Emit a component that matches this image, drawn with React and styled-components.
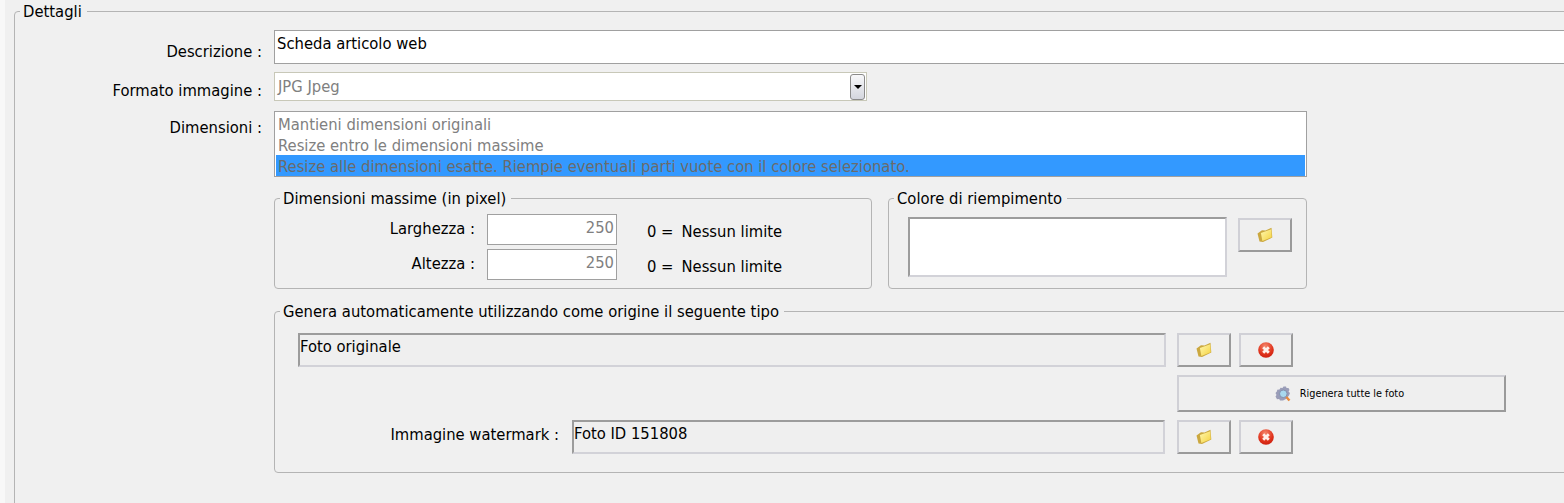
import React from "react";
import styled, { createGlobalStyle } from "styled-components";

const Global = createGlobalStyle`
  html, body { margin: 0; padding: 0; height: 503px; overflow: hidden; background: #f0f0f0; }
  #root { height: 503px; overflow: hidden; }
`;
const Page = styled.div`
  width: 1700px; height: 503px; box-sizing: border-box; overflow: hidden;
  padding: 1px 0 0 9px; background: #f0f0f0; border-left: 5px solid #f8f8f8;
  font-family: "DejaVu Sans Condensed", "DejaVu Sans", sans-serif; font-size: 16.45px; color: #000;
`;
const Group = styled.fieldset`
  margin: 0; min-width: 0; box-sizing: border-box;
  border: 1px solid #b4b4b4; border-radius: 4px;
  padding: 0;
  width: ${p => p.$w}px;
  height: ${p => p.$h}px;
`;
const Caption = styled.legend`
  margin-left: 5px; padding: 2px 5px 0 3px; font-size: 16.45px; line-height: 18px; color: #000;
`;
const Outer = styled.fieldset`
  margin: 0; min-width: 0; box-sizing: border-box; height: 600px; padding: 9px 0 0 0;
  border: 1px solid #b4b4b4; border-radius: 4px;
`;
const Row = styled.div`
  display: flex; align-items: flex-start;
  margin-bottom: ${p => p.$mb || 0}px;
`;
const Label = styled.div`
  width: 247px; flex: none; text-align: right; padding-top: ${p => p.$top || 0}px; line-height: 18px; white-space: pre;
`;
const Field = styled.div`
  margin-left: 12px; box-sizing: border-box; background: #fff; white-space: nowrap; overflow: hidden;
  border: 1px solid #a0a0a0; flex: 1; height: 34px;
  padding: 4px 2px; line-height: 18px;
`;
const Select = styled.div`
  margin-left: 12px; box-sizing: border-box; width: 593px; height: 29px; flex: none;
  background: #fff; border: 1px solid #c8c8b8; color: #808080; padding: 0 1px 0 3px;
  display: flex; align-items: center; justify-content: space-between;
`;
const SelectBtn = styled.div`
  width: 15px; height: 26px; box-sizing: border-box; border: 1px solid #8a8a8a; border-radius: 3px;
  background: linear-gradient(#f8f8fa, #d4d6de); display: flex; align-items: center; justify-content: center;
  &::after { content: ""; border: 4px solid transparent; border-top: 4px solid #000; border-bottom: 0; }
`;
const List = styled.div`
  margin-left: 12px; box-sizing: border-box; width: 1033px; height: 66px; flex: none;
  background: #fff; border: 1px solid #a0a0a0; padding: 1px; color: #808080;
`;
const Option = styled.div`
  height: 21px; line-height: 23px; padding-left: 2px; white-space: nowrap;
  background: ${p => p.$selected ? "#3399ff" : "transparent"};
  color: ${p => p.$selected ? "#6b6b6b" : "#808080"};
`;
const Indented = styled.div`margin-left: 259px;`;
const Pair = styled.div`display: flex; gap: 16px;`;
const DimBody = styled.div`padding-top: 6px;`;
const DimRow = styled.div`display: flex; align-items: flex-start; margin-bottom: 4px;`;
const DimLabel = styled.div`width: 200px; flex: none; text-align: right; padding-top: 6px; line-height: 18px;`;
const NumberBox = styled.div`
  margin-left: 12px; box-sizing: border-box; width: 130px; height: 31px; flex: none; background: #fff;
  border: 1px solid #a0a0a0; color: #808080; text-align: right; padding: 4px 2px; line-height: 18px;
`;
const Hint = styled.div`display: flex; gap: 8px; margin-left: 30px; padding-top: 9px; line-height: 18px; white-space: nowrap;`;
const ColorBody = styled.div`display: flex; align-items: flex-start; padding: 9px 0 0 19px;`;
const Sunken = styled.div`
  box-sizing: border-box; flex: none; width: ${p => p.$w}px; height: ${p => p.$h}px; margin-left: ${p => p.$ml || 0}px;
  background: ${p => p.$white ? "#fff" : "#efefef"}; line-height: 18px; padding: 3px 0 0 0; white-space: nowrap;
  border: 2px solid #d2d2d8; border-top-color: #9c9c9c; border-left-color: #9c9c9c;
`;
const Btn = styled.button`
  box-sizing: border-box; flex: none; width: ${p => p.$w || 54}px; height: ${p => p.$h || 34}px;
  margin-left: ${p => p.$ml || 0}px; margin-top: ${p => p.$mt || 0}px; padding: 0 ${p => p.$pr || 0}px 0 0; background: #efefef; color: #000;
  border: 2px solid #d0d0d6; border-right-color: #9a9a9a; border-bottom-color: #9a9a9a;
  display: flex; align-items: center; justify-content: center; gap: 9px;
  font-family: inherit; font-size: 10.8px;
`;
const GenRow = styled.div`display: flex; align-items: flex-start; margin-left: ${p => p.$ml || 0}px; margin-top: ${p => p.$mt || 0}px;`;
const WmLabel = styled.div`width: 284px; flex: none; text-align: right; padding-top: 6px; line-height: 18px; white-space: nowrap;`;

const FolderIcon = ({ id }) => (
  <svg width="16" height="16" viewBox="0 0 16 16">
    <defs><linearGradient id={id} x1="0" y1="0" x2="1" y2="1"><stop offset="0" stopColor="#fff8b0"/><stop offset="1" stopColor="#f5d23f"/></linearGradient></defs>
    <path d="M0.5 6.5 L5 3.2 L8.5 3.6 L14.5 0.8 L15.3 10.5 L6 15 L2.5 14.6 Z" fill="#cba83f"/>
    <path d="M3.9 6 L14.3 2.2 L14.7 10.2 L5.4 14.1 Z" fill={`url(#${id})`}/>
  </svg>
);
const CloseIcon = ({ id }) => (
  <svg width="16" height="16" viewBox="0 0 16 16">
    <defs><radialGradient id={id} cx="0.45" cy="0.25" r="0.85"><stop offset="0" stopColor="#f4856a"/><stop offset="0.6" stopColor="#e0331c"/><stop offset="1" stopColor="#c5180a"/></radialGradient></defs>
    <circle cx="8" cy="8" r="7.8" fill={`url(#${id})`}/>
    <path d="M5.2 5.2 L10.8 10.8 M10.8 5.2 L5.2 10.8" stroke="#fff0ea" strokeWidth="2.8"/>
  </svg>
);
const RegenIcon = () => (
  <svg width="16" height="16" viewBox="0 0 16 16">
    <path d="M8.5 0.5 L11 0.5 L11.5 2 L13.5 2 L14.5 4 L13.5 5.5 L15 7 L14 9.5 L11 13 L8 14.5 L5 14.5 L4.2 13 L2 13.2 L0.5 10.5 L1.5 9 L0.5 7 L2 5.2 L2.2 3.8 L4.5 3.6 L5.5 1.8 L7.5 2 Z" fill="#9a9db8"/>
    <circle cx="8.3" cy="7.8" r="3.8" fill="#a8d8ee" stroke="#8490ad"/>
    <path d="M11.3 11 L14.5 14.5" stroke="#e8893a" strokeWidth="2.4"/>
  </svg>
);

const NoLimit = () => <Hint><span>0 =</span><span>Nessun limite</span></Hint>;

export default function App() {
  return (
    <Page>
      <Global />
      <Outer>
        <Caption>Dettagli</Caption>
        <Row $mb={8}>
          <Label $top={13}>Descrizione :</Label>
          <Field>Scheda articolo web</Field>
        </Row>
        <Row $mb={10}>
          <Label $top={10}>Formato immagine :</Label>
          <Select>JPG Jpeg<SelectBtn /></Select>
        </Row>
        <Row $mb={11}>
          <Label $top={8}>Dimensioni :</Label>
          <List>
            <Option>Mantieni dimensioni originali</Option>
            <Option>Resize entro le dimensioni massime</Option>
            <Option $selected>Resize alle dimensioni esatte. Riempie eventuali parti vuote con il colore selezionato.</Option>
          </List>
        </Row>
        <Indented>
          <Pair>
            <Group $w={598} $h={101}>
              <Caption>Dimensioni massime (in pixel)</Caption>
              <DimBody>
                <DimRow>
                  <DimLabel>Larghezza :</DimLabel>
                  <NumberBox>250</NumberBox>
                  <NoLimit />
                </DimRow>
                <DimRow>
                  <DimLabel>Altezza :</DimLabel>
                  <NumberBox>250</NumberBox>
                  <NoLimit />
                </DimRow>
              </DimBody>
            </Group>
            <Group $w={419} $h={101}>
              <Caption>Colore di riempimento</Caption>
              <ColorBody>
                <Sunken $w={319} $h={60} $white />
                <Btn $ml={11} $mt={1}><FolderIcon id="f1" /></Btn>
              </ColorBody>
            </Group>
          </Pair>
          <Group $w={1400} $h={172} style={{ marginTop: 12 }}>
            <Caption>Genera automaticamente utilizzando come origine il seguente tipo</Caption>
            <GenRow $ml={23} $mt={12}>
              <Sunken $w={868} $h={34}>Foto originale</Sunken>
              <Btn $ml={11}><FolderIcon id="f2" /></Btn>
              <Btn $ml={8}><CloseIcon id="c1" /></Btn>
            </GenRow>
            <GenRow $ml={902} $mt={8}>
              <Btn $w={329} $h={37} $pr={4}><RegenIcon />Rigenera tutte le foto</Btn>
            </GenRow>
            <GenRow $mt={8}>
              <WmLabel>Immagine watermark :</WmLabel>
              <Sunken $ml={13} $w={593} $h={34}>Foto ID 151808</Sunken>
              <Btn $ml={12}><FolderIcon id="f3" /></Btn>
              <Btn $ml={8}><CloseIcon id="c2" /></Btn>
            </GenRow>
          </Group>
        </Indented>
      </Outer>
    </Page>
  );
}
